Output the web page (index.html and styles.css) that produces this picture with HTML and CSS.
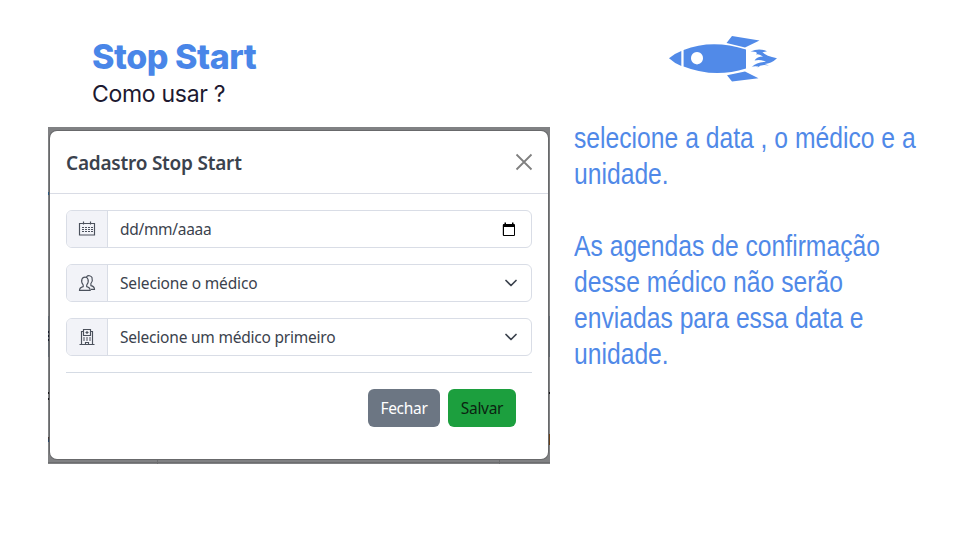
FILE: index.html
```html
<!DOCTYPE html>
<html lang="pt-BR">
<head>
<meta charset="utf-8">
<title>Stop Start</title>
<link rel="stylesheet" href="styles.css">
</head>
<body>
<main class="slide">
  <section class="left">
    <header class="heading">
      <h1><span>Stop Start</span></h1>
      <p><span>Como usar ?</span></p>
    </header>
    <div class="backdrop">
      <i class="mark m1"></i><i class="mark m2"></i><i class="mark m3"></i><i class="mark m4"></i><i class="mark m5"></i><i class="mark m6"></i><i class="mark m7"></i><i class="mark m8"></i><i class="mark m9"></i><i class="mark m10"></i>
      <div class="modal">
        <div class="modal-header">
          <h2>Cadastro Stop Start</h2>
          <svg class="close" viewBox="0 0 16 16"><path d="M.5.5l15 15M15.5.5l-15 15"/></svg>
        </div>
        <div class="modal-body">
          <div class="field">
            <div class="addon"><svg viewBox="0 0 16 16"><path d="M.5 2.5h15v11.500H.5zM4.500.5v3M11.500.5v3"/><path class="dots" d="M3 6.500h11M3 8.500h11M3 10.500h11"/></svg></div>
            <div class="control"><span class="date">dd/mm/aaaa</span><svg class="picker" viewBox="0 0 14 15"><path fill-rule="evenodd" d="M2.500.5h1.500V2h6V.5h1.500V2H12q1 0 1 1v10q0 1-1 1H1.800q-1 0-1-1V3q0-1 1-1h.7zM2 5v8h10V5z"/></svg></div>
          </div>
          <div class="field">
            <div class="addon"><svg viewBox="0 0 16 16"><path d="M.5 15.300h10.700c0-2.300-.9-3-3.500-3.700V10c1.500-1.800 1.800-4.500 1.200-6C8 1.500 4 1.500 3 4c-.6 1.500-.3 4.200 1.200 6v1.600C1.500 12.300.5 13 .5 15.300zM7.500 1.800C9 .1 12 .4 13 2.500c.6 1.800.2 4.300-1.100 6v2.100c2.700.6 3.600 1.700 3.600 3.700H12"/></svg></div>
            <div class="control"><span class="doctor">Selecione o médico</span><svg class="chevron" viewBox="0 0 12 8"><path d="M1 1.500l5 5 5-5"/></svg></div>
          </div>
          <div class="field">
            <div class="addon"><svg viewBox="0 0 16 16"><path d="M.5 15.500h15M2.500 15.500v-13h2M11.500 2.500h2v13M4.500 6.500v-6h7v6zM6.500 15.500v-2h3v2M8 2v3M6.500 3.500h3"/><path class="dots" d="M4 9h8M4 11h8"/></svg></div>
            <div class="control"><span class="unit">Selecione um médico primeiro</span><svg class="chevron" viewBox="0 0 12 8"><path d="M1 1.500l5 5 5-5"/></svg></div>
          </div>
          <div class="actions">
            <button class="btn secondary" type="button">Fechar</button>
            <button class="btn success" type="button">Salvar</button>
          </div>
        </div>
      </div>
    </div>
  </section>
  <section class="right">
    <svg class="rocket" viewBox="0 0 110 50"><path d="M1 24.300Q6 19.700 13.300 17v15Q6 29 1 24.300z"/><path fill-rule="evenodd" d="M15.600 16Q44 5 78 15.500v19Q46 44.500 15.600 32.500zM29 18a6 6.200 0 1 0 .01 0z"/><path d="M64 2l27.500 4.600L77 13.500 58.500 9zM59 41.200L77 37.500 90.500 44.300 64 47.500z"/><path d="M82.500 17.500Q91 13.500 99 17.200L94.500 18.200Q98 22 109 24.300Q103 30 96.500 30L101 31.500Q93 30 89 33.500L92 32.500Q85 31.500 83.500 33.200Q89 27.500 98 28Q93 25 86.500 26.500Q89 22.500 95 22.500Q89 19 88 21Q91 17 82.500 17.500z"/></svg>
    <div class="notes">
      <p>selecione a data , o médico e a<br>unidade.</p>
      <p>As agendas de confirmação<br>desse médico não serão<br>enviadas para essa data e<br>unidade.</p>
    </div>
  </section>
</main>
</body>
</html>
```
FILE: styles.css
```css
* { box-sizing: border-box; }
body { margin: 0; background: #fff; }
h1, h2, p { margin: 0; }
.slide { width: 956px; height: 536px; display: grid; grid-template-columns: 502px 1fr; column-gap: 24px; padding-left: 48px; overflow: hidden; }
.heading { height: 127px; padding: 37px 0 0 44px; }
.heading span { display: inline-block; white-space: nowrap; }
.heading h1 { font: 800 34px/40px Inter, sans-serif; color: #4986e8; letter-spacing: -.45px; }
.heading p { font: 400 23px/34px Inter, sans-serif; color: #1d1930; letter-spacing: -.3px; }
.backdrop { position: relative; height: 337px; background: #808183; padding: 4px 2px 5px; }
.modal { position: relative; height: 328px; background: #fff; border-radius: 7px; box-shadow: 0 0 0 1px #68696b; color: #3b424d; font-family: "Noto Sans", sans-serif; }
.modal-header { height: 63px; border-bottom: 1px solid #d9dce5; display: flex; align-items: center; justify-content: space-between; padding: 0 16px; }
h2 { font-size: 19px; line-height: 30px; padding-top: 1px; font-weight: 600; white-space: nowrap; letter-spacing: -.22px; }
svg { display: block; overflow: visible; }
.close { width: 16px; height: 16px; fill: none; stroke: #808080; stroke-width: 1.800; }
.modal-body { padding: 16px; display: flex; flex-direction: column; gap: 16px; }
.field { display: flex; height: 38px; border: 1px solid #d9dde6; border-radius: 6px; overflow: hidden; }
.addon { width: 41px; background: #f2f3f8; border-right: 1px solid #d9dde6; display: grid; place-items: center; }
.addon svg { width: 16px; height: 16px; fill: none; stroke: #4b515c; stroke-width: 1.150; }
.addon .dots { stroke-dasharray: 2 1; }
.control { flex: 1; display: flex; align-items: center; justify-content: space-between; padding: 0 14px 0 12px; font-size: 15.500px; white-space: nowrap; }
.control span { letter-spacing: -.22px; }
.control .date { letter-spacing: -.3px; }
.control .doctor { letter-spacing: -.15px; }
.picker { width: 14px; height: 15px; margin-right: 1px; fill: #000; }
.chevron { width: 12px; height: 8px; fill: none; stroke: #3b424d; stroke-width: 1.700; stroke-linecap: round; stroke-linejoin: round; }
.actions { border-top: 1px solid #d5dbe4; padding: 16px 16px 0; display: flex; justify-content: flex-end; gap: 8px; }
.btn { height: 38px; padding: 0; border: 0; border-radius: 6px; font: 15.500px "Noto Sans", sans-serif; letter-spacing: -.3px; }
.secondary { width: 72px; background: #6c7683; color: #fff; }
.success { width: 68px; background: #1c9f3e; color: #0b2411; }
.mark { position: absolute; width: 2px; height: 2px; background: #17171b; }
.m1 { left: 0; top: 71px; height: 3px; top: 65px; background: #2b587e; }
.m2 { left: 0; top: 189px; width: 502px; height: 41px; background: #626970; }
.m3 { left: 0; top: 204px; height: 11px; background: repeating-linear-gradient(#171b2a 0 2px, #626970 2px 4px); }
.m4 { left: 0; top: 265px; }
.m5 { left: 0; top: 271px; }
.m6 { left: 0; top: 310px; height: 5px; background: linear-gradient(#4a3426, #214b78); }
.m7 { right: 0; top: 265px; }
.m8 { right: 0; top: 307px; height: 11px; background: #694018; }
.m9 { left: 0; top: 335px; width: 502px; height: 1px; background: #6c6d6f; }
.m10 { left: 109px; top: 333px; width: 343px; height: 4px; background: none; border: solid #6c6d6f; border-width: 0 1px; }
.right { padding-top: 34px; }
.rocket { width: 110px; height: 50px; margin-left: 94px; fill: #518ae8; }
.notes { width: 390px; margin-top: 36px; font: 29px/36px "Liberation Sans", Arial, sans-serif; color: #5089e8; white-space: nowrap; transform: scaleX(.851); transform-origin: left top; }
.notes p + p { margin-top: 36px; }
```
